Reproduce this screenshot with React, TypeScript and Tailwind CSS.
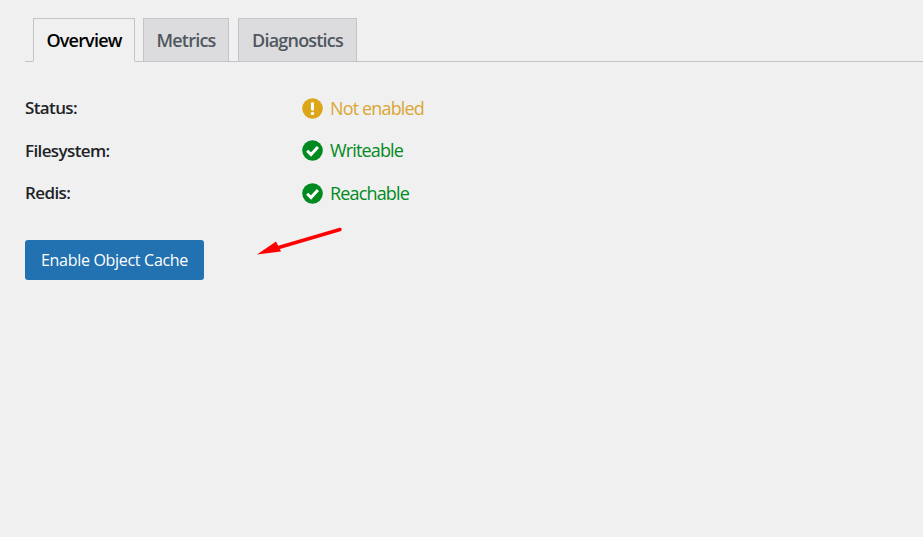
const rows = [
  { label: "Status:", value: "Not enabled", ok: false },
  { label: "Filesystem:", value: "Writeable", ok: true },
  { label: "Redis:", value: "Reachable", ok: true },
];

const tabClass =
  "mb-[-1px] block h-[44px] border border-[#c3c4c7] pt-[7px] text-center text-[18px] leading-[29px] font-semibold tracking-[-0.8px]";

function StatusIcon({ ok }: { ok: boolean }) {
  if (ok) {
    return (
      <svg viewBox="0 0 21 21" className="h-[21px] w-[21px] shrink-0">
        <circle cx="10.5" cy="10.5" r="10.3" fill="#008a20" />
        <path d="M5.2 10.8l3.8 3.8 6.9-7.5" fill="none" stroke="#fff" strokeWidth="3" />
      </svg>
    );
  }
  return (
    <svg viewBox="0 0 21 21" className="h-[21px] w-[21px] shrink-0">
      <circle cx="10.5" cy="10.5" r="10.3" fill="#dba617" />
      <rect x="9" y="4.2" width="3" height="8.4" rx="1" fill="#fff" />
      <circle cx="10.5" cy="15.4" r="1.7" fill="#fff" />
    </svg>
  );
}

export default function App() {
  return (
    <div className="relative h-[537px] w-[923px] overflow-hidden bg-[#f0f0f1] pt-[18px] pl-[25px] font-['Open_Sans','Noto_Sans',sans-serif]">
      <nav className="flex border-b border-[#c3c4c7] pl-[8px]">
        <a className={`${tabClass} w-[102px] border-b-[#f0f0f1] text-black`}>Overview</a>
        <a className={`${tabClass} ml-[8px] w-[86px] bg-[#dcdcde] text-[#50575e]`}>Metrics</a>
        <a className={`${tabClass} ml-[9px] w-[119px] bg-[#dcdcde] text-[#50575e]`}>Diagnostics</a>
      </nav>

      <div className="mt-[34.5px] flex flex-col gap-[19.6px]">
        {rows.map((row) => (
          <div key={row.label} className="flex h-[23px] items-center">
            <div className="w-[277px] text-[17px] font-semibold tracking-[-0.62px] text-[#1d2327]">{row.label}</div>
            <div className={`flex items-center gap-[7px] text-[18px] tracking-[-0.85px] ${row.ok ? "text-[#008a20]" : "text-[#dba633]"}`}>
              <StatusIcon ok={row.ok} />
              {row.value}
            </div>
          </div>
        ))}
      </div>

      <button className="mt-[35.3px] block h-[40px] w-[179px] rounded-[3px] bg-[#2271b1] text-center text-[16px] tracking-[-0.3px] text-white">
        Enable Object Cache
      </button>

      <svg viewBox="0 0 90 34" className="absolute top-[226px] left-[255px] h-[34px] w-[90px]">
        <path d="M85 3.5L22 22" fill="none" stroke="#f00" strokeWidth="3.4" strokeLinecap="round" />
        <path d="M2 28.5L21 15.5L26 25.5Z" fill="#f00" />
      </svg>
    </div>
  );
}
